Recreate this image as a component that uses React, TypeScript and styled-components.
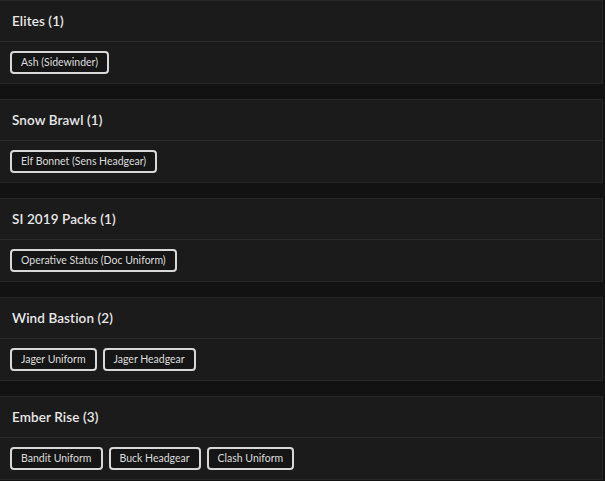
import React from 'react';
import styled, { createGlobalStyle } from 'styled-components';

const GlobalStyle = createGlobalStyle`
  html, body {
    margin: 0;
    padding: 0;
    background-color: #121212;
    font-family: Lato, "Noto Sans", sans-serif;
  }
`;

const Page = styled.main`
  display: flex;
  flex-direction: column;
  gap: 15px;
  width: 603px;
`;

const Card = styled.section`
  background-color: #1b1b1b;
  border: 1px solid #262626;
  border-left: none;
`;

const Header = styled.header`
  height: 40px;
  display: flex;
  align-items: center;
  padding: 0 12px;
  border-bottom: 1px solid #2b2b2b;
`;

const Title = styled.h2`
  margin: 0;
  font-size: 13.5px;
  font-weight: 600;
  letter-spacing: 0.1px;
  color: #e8e8e8;
`;

const Items = styled.div`
  height: 41px;
  display: flex;
  align-items: center;
  gap: 6px;
  padding: 0 10px;
`;

const Item = styled.button`
  height: 23px;
  padding: 0 9px;
  background-color: #151515;
  border: 2px solid #d8d8d8;
  border-radius: 4px;
  color: #dcdcdc;
  font-family: inherit;
  font-size: 10.5px;
  line-height: 1;
  cursor: pointer;
`;

type Group = {
  name: string;
  items: string[];
};

const groups: Group[] = [
  { name: 'Elites', items: ['Ash (Sidewinder)'] },
  { name: 'Snow Brawl', items: ['Elf Bonnet (Sens Headgear)'] },
  { name: 'SI 2019 Packs', items: ['Operative Status (Doc Uniform)'] },
  { name: 'Wind Bastion', items: ['Jager Uniform', 'Jager Headgear'] },
  { name: 'Ember Rise', items: ['Bandit Uniform', 'Buck Headgear', 'Clash Uniform'] },
];

export default function App() {
  return (
    <>
      <GlobalStyle />
      <Page>
        {groups.map((group) => (
          <Card key={group.name}>
            <Header>
              <Title>
                {group.name} ({group.items.length})
              </Title>
            </Header>
            <Items>
              {group.items.map((item) => (
                <Item key={item}>{item}</Item>
              ))}
            </Items>
          </Card>
        ))}
      </Page>
    </>
  );
}
